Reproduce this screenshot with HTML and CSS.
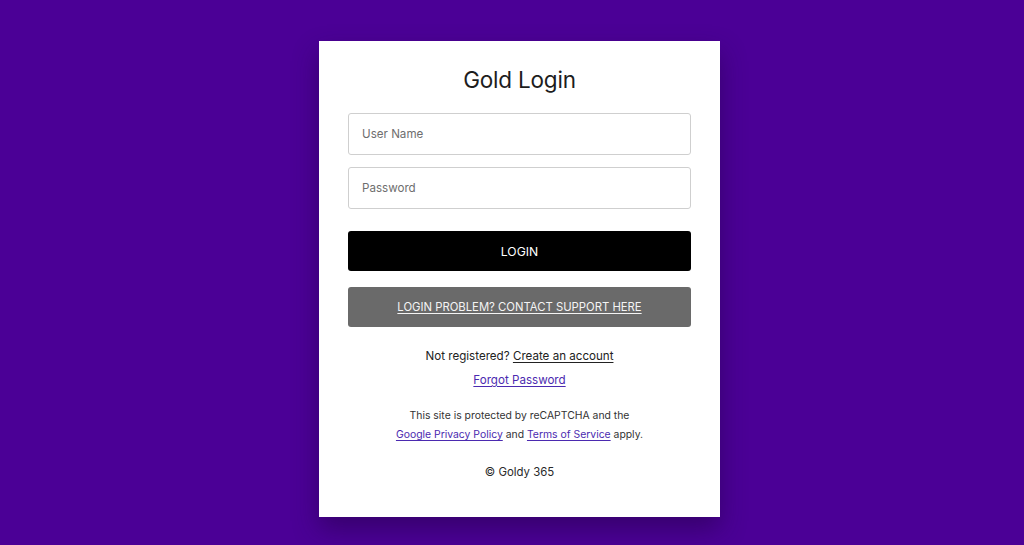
FILE: index.html
```html
<!DOCTYPE html>
<html lang="en">
<head>
<meta charset="utf-8">
<title>Gold Login</title>
<link rel="stylesheet" href="styles.css">
</head>
<body>
<main class="page">
  <section class="card">
    <h1 class="title">Gold Login</h1>
    <form class="form">
      <input class="field" type="text" placeholder="User Name">
      <input class="field" type="password" placeholder="Password">
      <button class="btn btn-login" type="button">LOGIN</button>
      <a class="btn btn-support" href="#">LOGIN PROBLEM? CONTACT SUPPORT HERE</a>
    </form>
    <p class="register">Not registered? <a class="dark-link" href="#">Create an account</a></p>
    <p class="forgot"><a class="link" href="#">Forgot Password</a></p>
    <p class="captcha">This site is protected by reCAPTCHA and the<br><a class="link" href="#">Google Privacy Policy</a> and <a class="link" href="#">Terms of Service</a> apply.</p>
    <p class="copy">© Goldy 365</p>
  </section>
</main>
</body>
</html>
```
FILE: styles.css
```css
* { box-sizing: border-box; }
html, body { margin: 0; padding: 0; }
body {
  background: #4b0096;
  font-family: Inter, "Noto Sans", sans-serif;
  color: #222;
  height: 545px;
  overflow: hidden;
}
.page {
  display: flex;
  justify-content: center;
  padding-top: 41px;
  padding-left: 15px;
}
.card {
  width: 401px;
  height: 476px;
  background: #fff;
  padding: 24px 29px 0;
  box-shadow: 0 12px 24px rgba(30, 0, 60, 0.45);
  text-align: center;
}
.title {
  margin: 0;
  font-size: 22.5px;
  font-weight: 400;
  line-height: 30px;
  color: #1d1d1d;
  letter-spacing: -0.2px;
}
.form {
  display: flex;
  flex-direction: column;
  margin-top: 18px;
}
.field {
  height: 42px;
  border: 1px solid #cfcfcf;
  border-radius: 3px;
  padding: 0 13px;
  font-family: inherit;
  font-size: 11.6px;
  color: #333;
  outline: none;
}
.field + .field { margin-top: 12px; }
.field::placeholder { color: #6e6e6e; }
.btn {
  display: flex;
  align-items: center;
  justify-content: center;
  height: 40px;
  border-radius: 3px;
  border: none;
  font-family: inherit;
  font-size: 12.2px;
  color: #fff;
}
.btn-login {
  background: #000;
  margin-top: 22px;
}
.btn-support {
  background: #6a6a6a;
  margin-top: 16px;
  font-size: 11.3px;
  text-decoration: underline;
  text-underline-offset: 2px;
  color: #f4f4f4;
}
.register {
  margin: 19px 0 0;
  font-size: 11.6px;
  line-height: 20px;
}
.dark-link { color: #222; text-underline-offset: 2px; }
.forgot {
  margin: 4px 0 0;
  font-size: 11.6px;
  line-height: 20px;
}
.link { color: #4b2ab0; text-underline-offset: 2px; }
.captcha {
  margin: 16px 0 0;
  font-size: 10.4px;
  line-height: 19px;
  color: #333;
}
.copy {
  margin: 18px 0 0;
  font-size: 11.4px;
  line-height: 20px;
  color: #2a2a2a;
}
```
